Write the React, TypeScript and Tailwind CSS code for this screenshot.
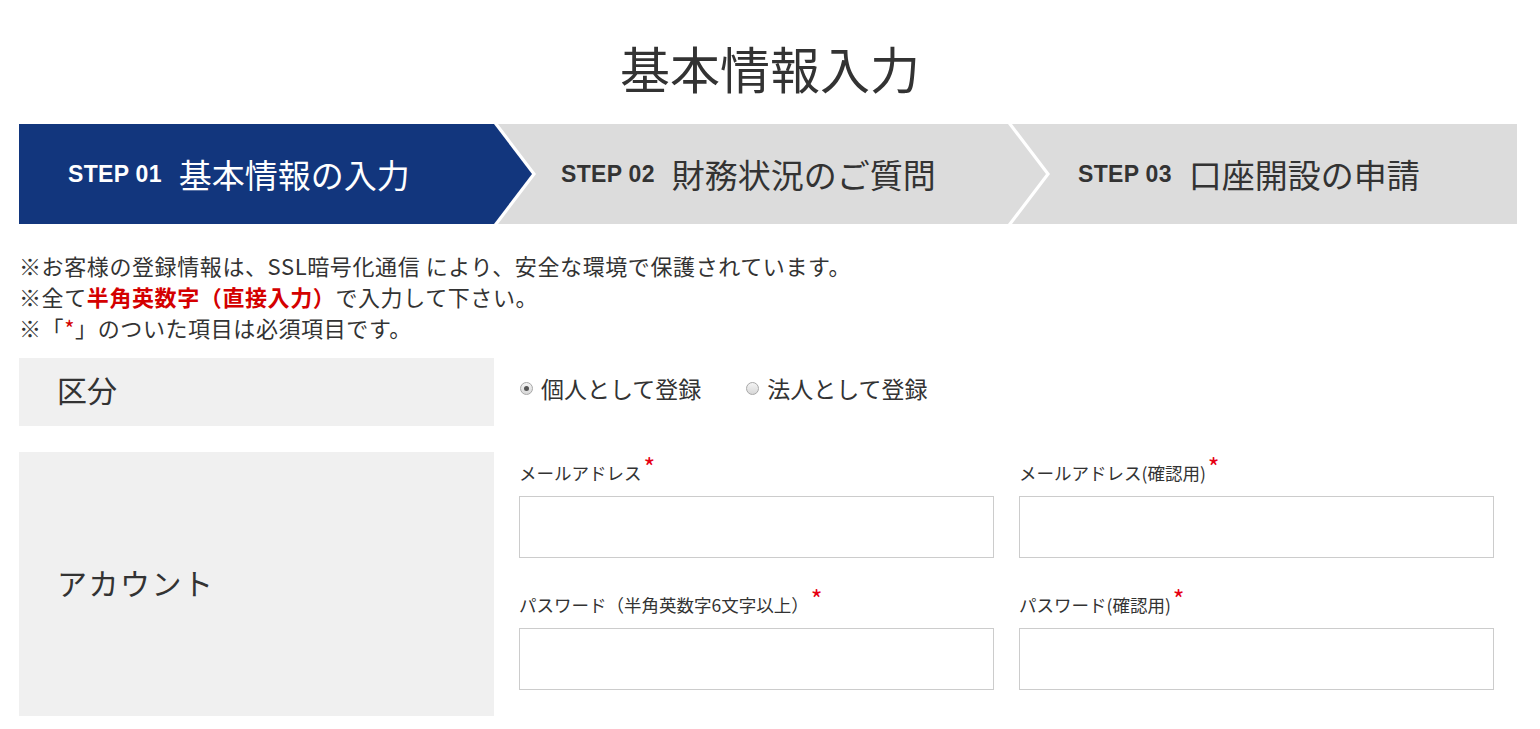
import React from 'react';

const jp = { fontFamily: '"Noto Sans CJK JP", "Noto Sans", sans-serif' };

function Required() {
  return (
    <span className="relative -top-[3px] ml-[2px] text-[25px] leading-none text-[#e60012]">*</span>
  );
}

interface StepProps {
  num: string;
  label: string;
  active?: boolean;
  shape: string;
  className: string;
}

function Step({ num, label, active, shape, className }: StepProps) {
  return (
    <div
      className={`flex h-[100px] shrink-0 items-center ${active ? 'bg-[#12367d] text-white' : 'bg-[#dcdcdc] text-[#333]'} ${shape} ${className}`}
    >
      <span className="text-[23px] font-bold tracking-[0.3px]" style={{ fontFamily: '"Liberation Sans", Arial, sans-serif' }}>
        {num}
      </span>
      <span className="ml-[17px] text-[33px] leading-none">{label}</span>
    </div>
  );
}

function Radio({ checked, label }: { checked?: boolean; label: string }) {
  return (
    <label className="flex items-center gap-[8px]">
      <span className="flex h-[13px] w-[13px] items-center justify-center rounded-full border border-[#a8a8a8] bg-gradient-to-b from-[#f4f4f4] to-[#d8d8d8]">
        {checked && <span className="h-[5px] w-[5px] rounded-full bg-[#555]" />}
      </span>
      <span>{label}</span>
    </label>
  );
}

function Field({ label }: { label: React.ReactNode }) {
  return (
    <div className="flex flex-col">
      <div className="mb-[13px] h-[26px] text-[17.5px] leading-[26px] text-[#333]">{label}</div>
      <input type="text" className="h-[62px] w-full border border-[#cccccc] bg-white px-2 outline-none" />
    </div>
  );
}

export default function App() {
  return (
    <div className="min-h-screen bg-white text-[#333]" style={jp}>
      <h1 className="pt-[35px] text-center text-[50px] font-normal leading-[64px] text-[#333]">基本情報入力</h1>

      <div className="ml-[19px] mt-[25px] flex w-[1498px]">
        <Step
          num="STEP 01"
          label="基本情報の入力"
          active
          shape="[clip-path:polygon(0_0,475px_0,513px_50px,475px_100px,0_100px)]"
          className="w-[513px] pl-[49px]"
        />
        <Step
          num="STEP 02"
          label="財務状況のご質問"
          shape="[clip-path:polygon(0_0,510px_0,548px_50px,510px_100px,0_100px,38px_50px)]"
          className="-ml-[34px] w-[548px] pl-[63px]"
        />
        <Step
          num="STEP 03"
          label="口座開設の申請"
          shape="[clip-path:polygon(0_0,505px_0,505px_100px,0_100px,38px_50px)]"
          className="-ml-[34px] w-[505px] pl-[66px]"
        />
      </div>

      <div className="ml-[19px] mt-[26px] text-[22px] leading-[31px] tracking-[0.6px]">
        <p>※お客様の登録情報は、SSL暗号化通信 により、安全な環境で保護されています。</p>
        <p>
          ※全て<span className="font-bold text-[#d40000]">半角英数字（直接入力）</span>で入力して下さい。
        </p>
        <p>
          ※「<span className="text-[#d40000]">*</span>」のついた項目は必須項目です。
        </p>
      </div>

      <div className="ml-[19px] mt-[15px] w-[1498px]">
        <div className="flex h-[68px]">
          <div className="flex w-[475px] shrink-0 items-center bg-[#f0f0f0] pb-[6px] pl-[38px] text-[30px]">区分</div>
          <div className="flex items-center gap-[45px] pb-[8px] pl-[26px] text-[23px]">
            <Radio checked label="個人として登録" />
            <Radio label="法人として登録" />
          </div>
        </div>

        <div className="mt-[26px] flex">
          <div className="flex w-[475px] shrink-0 items-center bg-[#f0f0f0] pb-[4px] pl-[38px] text-[30px] tracking-[1.5px]">アカウント</div>
          <div className="grid flex-1 grid-cols-2 gap-x-[25px] gap-y-[31px] pb-[26px] pl-[25px] pr-[23px] pt-[5px]">
            <Field label={<>メールアドレス<Required /></>} />
            <Field label={<>メールアドレス(確認用)<Required /></>} />
            <Field label={<>パスワード（半角英数字6文字以上）<Required /></>} />
            <Field label={<>パスワード(確認用)<Required /></>} />
          </div>
        </div>
      </div>
    </div>
  );
}
